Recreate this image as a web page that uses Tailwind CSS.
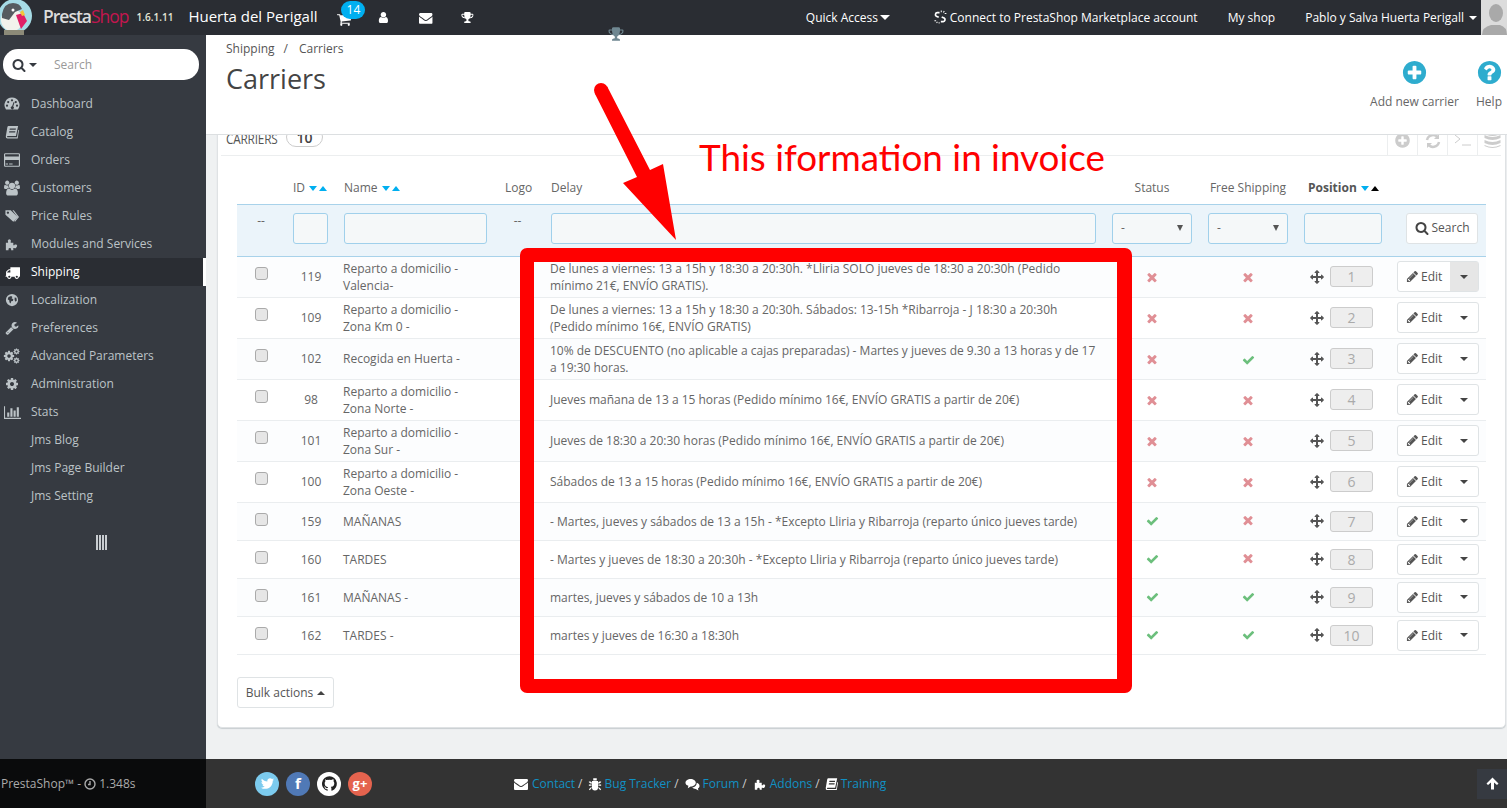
<!DOCTYPE html>
<html lang="en">
<head>
<meta charset="utf-8">
<title>Carriers</title>
<script src="https://cdn.jsdelivr.net/npm/@tailwindcss/browser@4"></script>
</head>
<body class="relative w-[1507px] h-[808px] overflow-hidden flex flex-col font-['Open_Sans',sans-serif] text-[12px] text-[#666] bg-[#eff1f2]">
<svg class="hidden" xmlns="http://www.w3.org/2000/svg">
<symbol id="check" viewBox="0 0 1792 1792"><path d="M1671 566q0 40-28 68l-724 724-136 136q-28 28-68 28t-68-28l-136-136-362-362q-28-28-28-68t28-68l136-136q28-28 68-28t68 28l294 295 656-657q28-28 68-28t68 28l136 136q28 28 28 68z"/></symbol>
<symbol id="times" viewBox="0 0 1408 1792"><path d="M1298 1214q0 40-28 68l-136 136q-28 28-68 28t-68-28l-294-294-294 294q-28 28-68 28t-68-28l-136-136q-28-28-28-68t28-68l294-294-294-294q-28-28-28-68t28-68l136-136q28-28 68-28t68 28l294 294 294-294q28-28 68-28t68 28l136 136q28 28 28 68t-28 68l-294 294 294 294q28 28 28 68z"/></symbol>
<symbol id="search" viewBox="0 0 1792 1792"><path d="M1216 832q0-185-131.500-316.500t-316.500-131.500-316.500 131.500-131.500 316.500 131.500 316.500 316.500 131.500 316.500-131.500 131.500-316.500zm512 832q0 52-38 90t-90 38q-54 0-90-38l-343-342q-179 124-399 124-143 0-273.500-55.500t-225-150-150-225-55.500-273.500 55.500-273.500 150-225 225-150 273.500-55.500 273.500 55.500 225 150 150 225 55.500 273.500q0 220-124 399l343 343q37 37 37 90z"/></symbol>
<symbol id="pencil" viewBox="0 0 1792 1792"><path d="M491 1536l91-91-235-235-91 91v107h128v128h107zm523-928q0-22-22-22-10 0-17 7l-542 542q-7 7-7 17 0 22 22 22 10 0 17-7l542-542q7-7 7-17zm-54-192l416 416-832 832h-416v-416zm683 96q0 53-37 90l-166 166-416-416 166-165q36-38 90-38 53 0 91 38l235 234q37 39 37 91z"/></symbol>
<symbol id="move" viewBox="0 0 1792 1792"><path d="M1792 896q0 26-19 45l-256 256q-19 19-45 19t-45-19-19-45v-128h-384v384h128q26 0 45 19t19 45-19 45l-256 256q-19 19-45 19t-45-19l-256-256q-19-19-19-45t19-45 45-19h128v-384h-384v128q0 26-19 45t-45 19-45-19l-256-256q-19-19-19-45t19-45l256-256q19-19 45-19t45 19 19 45v128h384v-384h-128q-26 0-45-19t-19-45 19-45l256-256q19-19 45-19t45 19l256 256q19 19 19 45t-19 45-45 19h-128v384h384v-128q0-26 19-45t45-19 45 19l256 256q19 19 19 45z"/></symbol>
<symbol id="envelope" viewBox="0 0 1792 1792"><path d="M1792 710v794q0 66-47 113t-113 47h-1472q-66 0-113-47t-47-113v-794q44 49 101 87 362 246 497 345 57 42 92.500 65.500t94.500 48 110 24.500h2q51 0 110-24.500t94.500-48 92.500-65.500q170-123 498-345 57-39 100-87zm0-294q0 79-49 151t-122 123q-376 261-468 325-10 7-42.500 30.500t-54 38-52 32.500-57.500 27-50 9h-2q-23 0-50-9t-57.500-27-52-32.500-54-38-42.500-30.500q-91-64-262-182.500t-205-142.500q-62-42-117-115.500t-55-136.500q0-78 41.500-130t118.500-52h1472q65 0 112.500 47t47.500 113z"/></symbol>
<symbol id="user" viewBox="0 0 1792 1792"><path d="M1536 1399q0 109-62.500 187t-150.500 78h-854q-88 0-150.500-78t-62.500-187q0-85 8.500-160.500t31.500-152 58.500-131 94-89 134.500-34.500q131 128 313 128t313-128q76 0 134.500 34.500t94 89 58.500 131 31.500 152 8.500 160.500zm-256-887q0 159-112.500 271.500t-271.500 112.500-271.500-112.500-112.500-271.500 112.500-271.500 271.500-112.500 271.500 112.500 112.500 271.500z"/></symbol>
<symbol id="cart" viewBox="0 0 1792 1792"><path d="M640 1536q0 52-38 90t-90 38-90-38-38-90 38-90 90-38 90 38 38 90zm896 0q0 52-38 90t-90 38-90-38-38-90 38-90 90-38 90 38 38 90zm128-1088v512q0 24-16.500 42.500t-40.500 21.500l-1044 122q13 60 13 70 0 16-24 64h920q26 0 45 19t19 45-19 45-45 19h-1024q-26 0-45-19t-19-45q0-11 8-31.500t16-36 21.500-40 15.500-29.500l-177-823h-204q-26 0-45-19t-19-45 19-45 45-19h256q16 0 28.500 6.500t19.500 15.500 13 24.500 8 26 5.500 29.500 4.500 26h1201q26 0 45 19t19 45z"/></symbol>
<symbol id="trophy" viewBox="0 0 1792 1792"><path d="M522 883q-74-162-74-371h-256v96q0 78 94.500 162t235.500 113zm1078-275v-96h-256q0 209-74 371 141-29 235.500-113t94.500-162zm128-128v128q0 71-41.500 143t-112 130-173 97.500-215.500 44.500q-42 54-95 95-38 34-52.500 72.500t-14.500 89.500q0 54 30.500 91t97.500 37q75 0 133.500 45.500t58.500 114.500v64q0 14-9 23t-23 9h-832q-14 0-23-9t-9-23v-64q0-69 58.500-114.500t133.500-45.500q67 0 97.500-37t30.500-91q0-51-14.500-89.500t-52.500-72.500q-53-41-95-95-113-5-215.500-44.500t-173-97.500-112-130-41.500-143v-128q0-40 28-68t68-28h288v-96q0-66 47-113t113-47h576q66 0 113 47t47 113v96h288q40 0 68 28t28 68z"/></symbol>
<symbol id="plus" viewBox="0 0 1792 1792"><path d="M1344 960v-128q0-26-19-45t-45-19h-256v-256q0-26-19-45t-45-19h-128q-26 0-45 19t-19 45v256h-256q-26 0-45 19t-19 45v128q0 26 19 45t45 19h256v256q0 26 19 45t45 19h128q26 0 45-19t19-45v-256h256q26 0 45-19t19-45zm320-64q0 209-103 385.500t-279.500 279.500-385.500 103-385.500-103-279.500-279.500-103-385.500 103-385.500 279.500-279.500 385.500-103 385.500 103 279.500 279.500 103 385.500z"/></symbol>
<symbol id="help" viewBox="0 0 1792 1792"><path d="M1024 1376v-192q0-14-9-23t-23-9h-192q-14 0-23 9t-9 23v192q0 14 9 23t23 9h192q14 0 23-9t9-23zm256-672q0-88-55.500-163t-138.500-116-170-41q-243 0-371 213-15 24 8 42l132 100q7 6 19 6 16 0 25-12 53-68 86-92 34-24 86-24 48 0 85.500 26t37.500 59q0 38-20 61t-68 45q-63 28-115.500 86.500t-52.500 125.500v36q0 14 9 23t23 9h192q14 0 23-9t9-23q0-19 21.500-49.500t54.500-49.500q32-18 49-28.500t46-35 44.500-48 28-60.500 12.500-81zm384 192q0 209-103 385.500t-279.500 279.500-385.500 103-385.500-103-279.500-279.500-103-385.500 103-385.500 279.500-279.500 385.500-103 385.500 103 279.500 279.500 103 385.500z"/></symbol>
<symbol id="card" viewBox="0 0 1792 1792"><path d="M1632 128q66 0 113 47t47 113v1216q0 66-47 113t-113 47h-1472q-66 0-113-47t-47-113v-1216q0-66 47-113t113-47h1472zm-1472 128q-13 0-22.500 9.500t-9.500 22.500v224h1536v-224q0-13-9.500-22.500t-22.500-9.500h-1472zm1472 1280q13 0 22.500-9.500t9.500-22.500v-608h-1536v608q0 13 9.500 22.500t22.500 9.500h1472zm-1440-128v-128h256v128h-256zm384 0v-128h384v128h-384z"/></symbol>
<symbol id="chart" viewBox="0 0 2048 1792"><path d="M640 896v512h-256v-512h256zm384-512v1024h-256v-1024h256zm1024 1152v128h-2048v-1536h128v1408h1920zm-640-896v768h-256v-768h256zm384-384v1152h-256v-1152h256z"/></symbol>
<symbol id="cog" viewBox="0 0 1792 1792"><path d="M1152 896q0-106-75-181t-181-75-181 75-75 181 75 181 181 75 181-75 75-181zm512-109v222q0 12-8 23t-20 13l-185 28q-19 54-39 91 35 50 107 138 10 12 10 25t-9 23q-27 37-99 108t-94 71q-12 0-26-9l-138-108q-44 23-91 38-16 136-29 186-7 28-36 28h-222q-14 0-24.500-8.500t-11.500-21.500l-28-184q-49-16-90-37l-141 107q-10 9-25 9-14 0-25-11-126-114-165-168-7-10-7-23 0-12 8-23 15-21 51-66.500t54-70.500q-27-50-41-99l-183-27q-13-2-21-12.500t-8-23.500v-222q0-12 8-23t19-13l186-28q14-46 39-92-40-57-107-138-10-12-10-24 0-10 9-23 26-36 98.500-107.500t94.500-71.500q13 0 26 10l138 107q44-23 91-38 16-136 29-186 7-28 36-28h222q14 0 24.500 8.500t11.500 21.500l28 184q49 16 90 37l142-107q9-9 24-9 13 0 25 10 129 119 165 170 7 8 7 22 0 12-8 23-15 21-51 66.500t-54 70.500q26 50 41 98l183 28q13 2 21 12.500t8 23.500z"/></symbol>
<symbol id="wrench" viewBox="0 0 1792 1792"><path d="M448 1472q0-26-19-45t-45-19-45 19-19 45 19 45 45 19 45-19 19-45zm644-420l-682 682q-37 37-90 37-52 0-91-37l-106-108q-38-36-38-90 0-53 38-91l681-681q39 98 114.500 173.500t173.500 114.500zm634-435q0 39-23 106-47 134-164.500 217.500t-258.500 83.500q-185 0-316.500-131.500t-131.500-316.500 131.500-316.500 316.500-131.500q58 0 121.500 16.500t107.500 46.500q16 11 16 28t-16 28l-293 169v224l193 107q5-3 79-48.500t135.500-81 70.500-35.500q15 0 23.500 10t8.500 25z"/></symbol>
<symbol id="truck" viewBox="0 0 1792 1792"><path d="M640 1408q0-52-38-90t-90-38-90 38-38 90 38 90 90 38 90-38 38-90zm-384-512h384v-256h-158q-13 0-22 9l-195 195q-9 9-9 22v30zm1280 512q0-52-38-90t-90-38-90 38-38 90 38 90 90 38 90-38 38-90zm256-1088v1024q0 15-4 26.500t-13.500 18.500-16.500 11.500-23.500 6-22.500 2-25.500 0-22.500-.5q0 106-75 181t-181 75-181-75-75-181h-384q0 106-75 181t-181 75-181-75-75-181h-64q-3 0-22.500.5t-25.500 0-22.500-2-23.500-6-16.500-11.500-13.500-18.500-4-26.500q0-26 19-45t45-19v-320q0-8-.5-35t0-38 2.500-34.500 6.500-37 14-30.500 22.500-30l198-198q19-19 50.500-32t58.500-13h160v-192q0-26 19-45t45-19h1024q26 0 45 19t19 45z"/></symbol>
<symbol id="users" viewBox="0 0 1920 1792"><path d="M593 896q-162 5-265 128h-134q-82 0-138-40.500t-56-118.500q0-353 124-353 6 0 43.500 21t97.500 42.500 119 21.500q67 0 133-23-5 37-5 66 0 139 81 256zm1071 637q0 120-73 189.500t-194 69.500h-874q-121 0-194-69.500t-73-189.500q0-53 3.500-103.500t14-109 26.500-108.500 43-97.500 62-81 85.500-53.500 111.500-20q10 0 43 21.500t73 48 107 48 135 21.500 135-21.500 107-48 73-48 43-21.500q61 0 111.500 20t85.500 53.500 62 81 43 97.500 26.500 108.500 14 109 3.500 103.500zm-1024-1277q0 106-75 181t-181 75-181-75-75-181 75-181 181-75 181 75 75 181zm704 384q0 159-112.500 271.500t-271.500 112.500-271.500-112.500-112.500-271.500 112.500-271.500 271.500-112.500 271.500 112.500 112.500 271.500zm576 225q0 78-56 118.500t-138 40.500h-134q-103-123-265-128 81-117 81-256 0-29-5-66 66 23 133 23 59 0 119-21.500t97.500-42.500 43.500-21q124 0 124 353zm-128-609q0 106-75 181t-181 75-181-75-75-181 75-181 181-75 181 75 75 181z"/></symbol>
<symbol id="twitter" viewBox="0 0 1792 1792"><path d="M1684 408q-67 98-162 167 1 14 1 42 0 130-38 259.500t-115.500 248.500-184.500 210.500-258 146-323 54.500q-271 0-496-145 35 4 78 4 225 0 401-138-105-2-188-64.500t-114-159.500q33 5 61 5 43 0 85-11-112-23-185.500-111.500t-73.500-205.500v-4q68 38 146 41-66-44-105-115t-39-154q0-88 44-163 121 149 294.500 238.500t371.500 99.500q-8-38-8-74 0-134 94.500-228.500t228.500-94.500q140 0 236 102 109-21 205-78-37 115-142 178 92-10 184-50z"/></symbol>
<symbol id="puzzle" viewBox="0 0 16 16"><path d="M3.500 5.500a1.800 1.800 0 1 1 3 0v1H9.500V9.500h1a1.800 1.800 0 1 1 0 3h-1V15H7v-1a1.500 1.500 0 0 0-3 0v1H1V6.500h2.500z"/><path d="M11 8.500h1.300a1.500 1.500 0 1 1 0 3H11z"/></symbol>
<symbol id="book" viewBox="0 0 16 16"><path d="M4 1h11l-2.500 11.500H3.200q-1 0-.9.800t1 .7h10.400l1.500-8.500.8.600L14.500 15.500H2.800Q.6 15.500.9 12.800L2.700 2.500Q3 1 4 1zm1.500 3-.3 1.500h7l.3-1.500zm-.6 3-.3 1.500h7l.3-1.500z" fill-rule="evenodd"/></symbol>
<symbol id="tags" viewBox="0 0 16 16"><path d="M.5 1.500h6l8 7.500-5 5.500-9-8zm2.800 1.400a1.300 1.300 0 1 0 .01 0z" fill-rule="evenodd"/><path d="M8.500 1.500h1.500l6 7.500-4.500 5.500-1-.8 3.700-4.700z"/></symbol>
<symbol id="gauge" viewBox="0 0 16 16"><path fill-rule="evenodd" d="M8 1.500A7.500 7.500 0 0 0 2 13.500h12A7.500 7.500 0 0 0 8 1.500zM8 3.200a1.100 1.100 0 1 1 0 2.200 1.100 1.100 0 0 1 0-2.200zM4.200 5a1.100 1.100 0 1 1 0 2.200 1.100 1.100 0 0 1 0-2.200zM11.800 5a1.100 1.100 0 1 1 0 2.200 1.100 1.100 0 0 1 0-2.200zM3 8.600a1.100 1.100 0 1 1 0 2.200 1.100 1.100 0 0 1 0-2.200zM13 8.600a1.100 1.100 0 1 1 0 2.200 1.100 1.100 0 0 1 0-2.200zM9.600 6l.9.400-1.300 4.100a1.500 1.500 0 1 1-1.100-.3z"/></symbol>
<symbol id="globe" viewBox="0 0 16 16"><path fill-rule="evenodd" d="M8 1a7 7 0 1 0 0 14A7 7 0 0 0 8 1zM4 4.500l3-1 1.500 1-1 1.500 2 1-.5 2-2 .5-.5 2.500-1.500-1.500V8.500L3 7zM11 5l2 .5.500 3-1.500 1.500-1-2z"/></symbol>
<symbol id="bug" viewBox="0 0 16 16"><path d="M6 1.500h4V4H6zM4.500 4.500h7V12a3.500 3.500 0 0 1-7 0zM1 5h2l1.500 1.500v1H3L1 6zM15 5h-2l-1.500 1.500v1H13l2-1.500zM1 8.500h3v1.500H1zM12 8.500h3v1.500h-3zM1 14l3-3v1.800L2 15zM15 14l-3-3v1.800L14 15z"/></symbol>
<symbol id="comments" viewBox="0 0 16 16"><path d="M6 2c3 0 5.500 1.800 5.500 4S9 10 6 10l-3 2 .6-2.600C1.800 8.700.5 7.500.5 6 .5 3.800 3 2 6 2zM12.500 6.200c1.800.6 3 1.800 3 3.300 0 1.100-.7 2-1.700 2.700l.5 2.300-2.800-1.800c-1.600 0-3-.5-3.800-1.400 3-.2 4.800-2.400 4.800-5.100z"/></symbol>
</svg>

<!-- top bar -->
<header class="h-[35px] shrink-0 bg-[#2a2d33] flex items-center text-white">
  <div class="w-[32px] h-[35px] relative overflow-hidden shrink-0">
    <svg width="32" height="35" viewBox="0 0 32 35"><circle cx="15" cy="16" r="17" fill="#a6dbe6"/><ellipse cx="12" cy="20" rx="11" ry="11" fill="#f2f2ec"/><path d="M2 14q2-11 11-11 7 0 9 6l-7 3-6 8-7-2z" fill="#565b60"/><path d="M16 15l7-2 4 8-6 8z" fill="#df1f66"/><path d="M20 12l3-2 2 5-3 1z" fill="#f2c53c"/><circle cx="13" cy="10" r="1.500" fill="#fff"/><rect x="4" y="30" width="20" height="5" fill="#8c8a78"/></svg>
  </div>
  <div class="ml-[11px] text-[17.5px] leading-none font-semibold tracking-[-1px] text-[#dcdcdc] -mt-[1px] whitespace-nowrap">Presta<span class="text-[#c3164f] font-normal">Shop</span></div>
  <div class="ml-[8px] text-[10px] font-semibold text-[#e4e6d8] whitespace-nowrap">1.6.1.11</div>
  <div class="ml-[15px] text-[15px] -mt-[2px] whitespace-nowrap">Huerta del Perigall</div>
  <div class="relative ml-[20px] w-[14px] h-[14px]">
    <svg class="w-[15px] h-[15px] fill-white mt-[1px]"><use href="#cart"/></svg>
    <span class="absolute left-[4px] -top-[10px] w-[24px] h-[18px] rounded-[10px] bg-[#00aff0] text-center text-[12px] leading-[18px]">14</span>
  </div>
  <svg class="ml-[26px] w-[15px] h-[15px] fill-white"><use href="#user"/></svg>
  <svg class="ml-[29px] w-[16px] h-[16px] fill-white"><use href="#envelope"/></svg>
  <svg class="ml-[28px] w-[15px] h-[15px] fill-white"><use href="#trophy"/></svg>
  <div class="ml-[332px] flex items-center whitespace-nowrap">Quick Access<span class="ml-[2px] w-0 h-0 border-x-[5px] border-x-transparent border-t-[5px] border-t-white"></span></div>
  <svg class="ml-[44px] -mt-[2px]" width="15" height="16" viewBox="0 0 15 16" fill="none" stroke="white" stroke-width="2"><path d="M6.500 3H3.800a2.200 2.200 0 0 0-1 4.100L5.500 8.200M9 8l2.800 1.200a2.200 2.200 0 0 1-1 4.100H8"/><path d="M8.500 .5v2M12 1l-1 1.700M14.500 4h-2M6 15.500V14M3 15l1-1.500M.5 12.500h2" stroke-width="1.200"/></svg>
  <div class="ml-[3px] whitespace-nowrap">Connect to PrestaShop Marketplace account</div>
  <div class="ml-[30px] whitespace-nowrap">My shop</div>
  <div class="ml-[30px] whitespace-nowrap">Pablo y Salva Huerta Perigall</div>
  <span class="ml-[5px] w-0 h-0 border-x-[4px] border-x-transparent border-t-[4px] border-t-white"></span>
  <div class="ml-[4px] w-[26px] h-[35px] bg-[#dcdcdc] overflow-hidden shrink-0">
    <svg width="26" height="35" viewBox="0 0 26 35"><ellipse cx="15" cy="13" rx="7" ry="9" fill="#a9a9a9"/><path d="M1 35q0-8 9-10h9q7 2 7 10z" fill="#a9a9a9"/></svg>
  </div>
</header>

<div class="flex-1 flex min-h-0">
  <!-- sidebar -->
  <aside class="w-[206px] shrink-0 bg-[#363a41] text-[#bcc3c7]">
    <div class="pl-[3px] pt-[14px] h-[55px]">
      <div class="w-[196px] h-[31px] bg-white rounded-[15px] flex items-center text-[#999]">
        <svg class="ml-[9px] w-[14px] h-[14px] fill-[#363a41]"><use href="#search"/></svg>
        <span class="ml-[3px] w-0 h-0 border-x-[4px] border-x-transparent border-t-[4px] border-t-[#363a41]"></span>
        <span class="ml-[17px]">Search</span>
      </div>
    </div>
    <nav>
      <div class="h-[28px] flex items-center"><span class="w-[31px] flex justify-center pr-[7px]"><svg class="w-[16px] h-[16px] fill-[#bcc3c7]"><use href="#gauge"/></svg></span>Dashboard</div>
      <div class="h-[28px] flex items-center"><span class="w-[31px] flex justify-center pr-[7px]"><svg class="w-[14px] h-[14px] fill-[#bcc3c7]"><use href="#book"/></svg></span>Catalog</div>
      <div class="h-[28px] flex items-center"><span class="w-[31px] flex justify-center pr-[7px]"><svg class="w-[16px] h-[16px] fill-[#bcc3c7]"><use href="#card"/></svg></span>Orders</div>
      <div class="h-[28px] flex items-center"><span class="w-[31px] flex justify-center pr-[7px]"><svg class="w-[16px] h-[16px] fill-[#bcc3c7]"><use href="#users"/></svg></span>Customers</div>
      <div class="h-[28px] flex items-center"><span class="w-[31px] flex justify-center pr-[7px]"><svg class="w-[16px] h-[14px] fill-[#bcc3c7]"><use href="#tags"/></svg></span>Price Rules</div>
      <div class="h-[28px] flex items-center"><span class="w-[31px] flex justify-center pr-[7px]"><svg class="w-[14px] h-[14px] fill-[#bcc3c7]"><use href="#puzzle"/></svg></span>Modules and Services</div>
      <div class="h-[28px] flex items-center bg-[#2a2d33] text-white border-r-[3px] border-r-white"><span class="w-[31px] flex justify-center pr-[7px]"><svg class="w-[15px] h-[15px] fill-white"><use href="#truck"/></svg></span>Shipping</div>
      <div class="h-[28px] flex items-center"><span class="w-[31px] flex justify-center pr-[7px]"><svg class="w-[14px] h-[14px] fill-[#bcc3c7]"><use href="#globe"/></svg></span>Localization</div>
      <div class="h-[28px] flex items-center"><span class="w-[31px] flex justify-center pr-[7px]"><svg class="w-[14px] h-[14px] fill-[#bcc3c7]"><use href="#wrench"/></svg></span>Preferences</div>
      <div class="h-[28px] flex items-center"><span class="w-[31px] relative block h-[16px]"><svg class="absolute left-[3px] top-[2px] w-[12px] h-[12px] fill-[#bcc3c7]"><use href="#cog"/></svg><svg class="absolute left-[13px] top-0 w-[7px] h-[7px] fill-[#bcc3c7]"><use href="#cog"/></svg><svg class="absolute left-[13px] top-[9px] w-[7px] h-[7px] fill-[#bcc3c7]"><use href="#cog"/></svg></span>Advanced Parameters</div>
      <div class="h-[28px] flex items-center"><span class="w-[31px] flex justify-center pr-[7px]"><svg class="w-[14px] h-[14px] fill-[#bcc3c7]"><use href="#cog"/></svg></span>Administration</div>
      <div class="h-[28px] flex items-center"><span class="w-[31px] flex justify-center pr-[7px]"><svg class="w-[17px] h-[15px] fill-[#bcc3c7]"><use href="#chart"/></svg></span>Stats</div>
      <div class="h-[28px] flex items-center pl-[31px]">Jms Blog</div>
      <div class="h-[28px] flex items-center pl-[31px]">Jms Page Builder</div>
      <div class="h-[28px] flex items-center pl-[31px]">Jms Setting</div>
      <div class="mt-[25px] ml-[96px] w-[11px] h-[15px] flex justify-between">
        <span class="w-[1.5px] bg-[#c8ccd0]"></span><span class="w-[1.5px] bg-[#c8ccd0]"></span><span class="w-[1.5px] bg-[#c8ccd0]"></span><span class="w-[1.5px] bg-[#c8ccd0]"></span>
      </div>
    </nav>
  </aside>

  <!-- main -->
  <main class="flex-1 min-w-0 flex flex-col">
    <div class="h-[100px] shrink-0 bg-white border-b border-[#dcdfe1] pl-[20px] flex justify-between relative z-10">
      <div>
        <div class="pt-[5px] leading-[17px] text-[#555]">Shipping<span class="ml-[9px] mr-[11px]">/</span>Carriers</div>
        <h1 class="text-[27px] leading-[36px] mt-[4px] text-[#444]">Carriers</h1>
      </div>
      <div class="flex pt-[24px] text-[#666]">
        <div class="w-[89px] flex flex-col items-center">
          <svg class="w-[27px] h-[27px] fill-[#2eacce]"><use href="#plus"/></svg>
          <span class="mt-[7px] leading-[17px] whitespace-nowrap">Add new carrier</span>
        </div>
        <div class="ml-[12px] w-[36px] flex flex-col items-center">
          <svg class="w-[27px] h-[27px] fill-[#2eacce]"><use href="#help"/></svg>
          <span class="mt-[7px] leading-[17px]">Help</span>
        </div>
      </div>
    </div>

    <div class="flex-1 min-h-0 overflow-hidden pl-[11px] pr-[1px]">
      <section class="-mt-[12px] h-[605px] bg-white rounded-[5px] border border-[#dfe2e4] shadow-[0_1px_1px_#c8ced1]">
        <div class="mx-[3px] mr-[4px] h-[32px] border-b border-[#eceeef] flex items-start pl-[5px] relative text-[#555]">
          <span class="text-[14px] leading-[20px] scale-x-[0.84] origin-left w-[60px] whitespace-nowrap mt-[5px] -tracking-[0.2px]">CARRIERS</span>
          <span class="w-[37px] h-[20px] mt-[3px] rounded-[10px] border border-[#ccc] text-center font-semibold leading-[20px] text-[14px] text-[#444]">10</span>
          <div class="ml-auto self-stretch flex mt-[9px]">
            <div class="w-[30px] border-l border-[#eceeef] flex justify-center"><svg class="w-[17px] h-[17px] fill-[#ccc] -mt-[1px]"><use href="#plus"/></svg></div>
            <div class="w-[30px] border-l border-[#eceeef] flex justify-center"><svg width="16" height="16" viewBox="0 0 16 16" fill="none" stroke="#ccc" stroke-width="2.500"><path d="M2 7a6 6 0 0 1 11-2M14 9a6 6 0 0 1-11 2"/><path d="M14 1v5H9M2 15v-5h5" fill="#ccc" stroke="none"/></svg></div>
            <div class="w-[30px] border-l border-[#eceeef] flex justify-center"><svg width="18" height="14" viewBox="0 0 18 14" fill="none" stroke="#ccc" stroke-width="1"><path d="M1 2l5 4-5 4M8 12h9"/></svg></div>
            <div class="w-[24px] border-l border-[#eceeef] flex justify-start pl-[6px]"><svg width="17" height="20" viewBox="0 0 17 20" fill="#ccc" class="-mt-[4px] shrink-0"><ellipse cx="8.500" cy="4" rx="8" ry="3"/><path d="M.5 6q8 4 16 0v3q-8 4-16 0zM.5 11q8 4 16 0v3q-8 4-16 0zM.5 16q8 4 16 0v1q-8 4-16 0z"/></svg></div>
          </div>
        </div>

        <div class="ml-[19px] w-[1249px] mt-[14px]">
          <table class="w-[1249px] table-fixed border-collapse text-[#666]">
            <colgroup><col class="w-[48px]"><col class="w-[51px]"><col class="w-[159px]"><col class="w-[48px]"><col class="w-[561px]"><col class="w-[96px]"><col class="w-[96px]"><col class="w-[94px]"><col class="w-[96px]"></colgroup>
            <thead>
              <tr class="h-[34px] [&>th]:pt-[3px]">
                <th class="font-normal"></th>
                <th class="font-normal text-left pl-[8px]"><span class="inline-flex items-center gap-[2px] whitespace-nowrap">ID <svg width="8" height="5" class="fill-[#00aff0] ml-[2px]"><polygon points="0,0 8,0 4,5"/></svg><svg width="8" height="5" class="fill-[#00aff0]"><polygon points="0,5 8,5 4,0"/></svg></span></th>
                <th class="font-normal text-left pl-[8px]"><span class="inline-flex items-center gap-[2px]">Name <svg width="8" height="5" class="fill-[#00aff0] ml-[2px]"><polygon points="0,0 8,0 4,5"/></svg><svg width="8" height="5" class="fill-[#00aff0]"><polygon points="0,5 8,5 4,0"/></svg></span></th>
                <th class="font-normal text-left pl-[10px]">Logo</th>
                <th class="font-normal text-left pl-[8px]">Delay</th>
                <th class="font-normal text-center">Status</th>
                <th class="font-normal text-center">Free Shipping</th>
                <th class="text-left pl-[12px] text-[#555] font-bold"><span class="inline-flex items-center gap-[2px] whitespace-nowrap">Position <svg width="8" height="5" class="fill-[#00aff0] ml-[2px]"><polygon points="0,0 8,0 4,5"/></svg><svg width="8" height="5" class="fill-black"><polygon points="0,5 8,5 4,0"/></svg></span></th>
                <th></th>
              </tr>
              <tr class="h-[52px] bg-[#ebf4fa] border-y border-[#a8d2ea]">
                <th class="font-normal text-center align-top pt-[7px]">--</th>
                <th class="px-[8px] align-top pt-[8px]"><div class="h-[31px] bg-[#f5f8f9] border border-[#a0d0eb] rounded-[3px]"></div></th>
                <th class="px-[8px] align-top pt-[8px]"><div class="h-[31px] bg-[#f5f8f9] border border-[#a0d0eb] rounded-[3px]"></div></th>
                <th class="font-normal text-center align-top pt-[7px] pr-[3px]">--</th>
                <th class="px-[8px] align-top pt-[8px]"><div class="h-[31px] bg-[#f5f8f9] border border-[#a0d0eb] rounded-[3px]"></div></th>
                <th class="px-[8px] align-top pt-[8px] font-normal"><div class="h-[31px] bg-[#f5f8f9] border border-[#a0d0eb] rounded-[3px] flex items-center justify-between px-[8px]"><span>-</span><span class="w-0 h-0 border-x-[3.500px] border-x-transparent border-t-[6px] border-t-[#555]"></span></div></th>
                <th class="px-[8px] align-top pt-[8px] font-normal"><div class="h-[31px] bg-[#f5f8f9] border border-[#a0d0eb] rounded-[3px] flex items-center justify-between px-[8px]"><span>-</span><span class="w-0 h-0 border-x-[3.500px] border-x-transparent border-t-[6px] border-t-[#555]"></span></div></th>
                <th class="px-[8px] align-top pt-[8px]"><div class="h-[31px] bg-[#f5f8f9] border border-[#a0d0eb] rounded-[3px]"></div></th>
                <th class="pl-[16px] pr-[8px] align-top pt-[8px] font-normal"><div class="h-[31px] bg-white border border-[#dfe3e5] rounded-[3px] flex items-center justify-center gap-[3px] text-[#555]"><svg class="w-[14px] h-[14px] fill-[#444]"><use href="#search"/></svg>Search</div></th>
              </tr>
            </thead>
            <tbody class="leading-[17px]">
              <tr class="h-[41px] bg-[#fcfdfe] border-b border-[#eaedef]">
                <td class="text-center"><input type="checkbox" class="w-[13px] h-[13px] appearance-none bg-[#e6e6e6] border border-[#aaa] rounded-[3px] -translate-y-[1px]"></td>
                <td class="text-center pl-[1px]">119</td>
                <td class="pl-[7px]">Reparto a domicilio -<br>Valencia-</td>
                <td></td>
                <td class="pl-[7px]">De lunes a viernes: 13 a 15h y 18:30 a 20:30h. *Lliria SOLO jueves de 18:30 a 20:30h (Pedido<br>mínimo 21€, ENVÍO GRATIS).</td>
                <td><svg class="mx-auto w-[12px] h-[14px] fill-[#e08f95] translate-y-[1px]"><use href="#times"/></svg></td>
                <td><svg class="mx-auto w-[12px] h-[14px] fill-[#e08f95] translate-y-[1px]"><use href="#times"/></svg></td>
                <td class="pl-[14px]"><div class="flex items-center gap-[6px]"><svg class="w-[14px] h-[14px] fill-[#555]"><use href="#move"/></svg><div class="w-[43px] h-[21px] bg-[#eee] border border-[#ccc] rounded-[3px] text-center leading-[19px] text-[14px] text-[#aaa]">1</div></div></td>
                <td class="pl-[7px]"><div class="w-[82px] h-[31px] bg-white border border-[#dfe3e5] rounded-[3px] flex items-center"><span class="flex-1 flex items-center gap-[2px] pl-[8px] text-[#555]"><svg class="w-[13px] h-[13px] fill-[#555]"><use href="#pencil"/></svg>Edit</span><span class="w-[28px] h-full bg-[#e6e6e6] flex items-center justify-center"><span class="w-0 h-0 border-x-[4px] border-x-transparent border-t-[4px] border-t-[#444]"></span></span></div></td>
              </tr>
              <tr class="h-[41px] border-b border-[#eaedef]">
                <td class="text-center"><input type="checkbox" class="w-[13px] h-[13px] appearance-none bg-[#e6e6e6] border border-[#aaa] rounded-[3px] -translate-y-[1px]"></td>
                <td class="text-center pl-[1px]">109</td>
                <td class="pl-[7px]">Reparto a domicilio -<br>Zona Km 0 -</td>
                <td></td>
                <td class="pl-[7px]">De lunes a viernes: 13 a 15h y 18:30 a 20:30h. Sábados: 13-15h *Ribarroja - J 18:30 a 20:30h<br>(Pedido mínimo 16€, ENVÍO GRATIS)</td>
                <td><svg class="mx-auto w-[12px] h-[14px] fill-[#e08f95] translate-y-[1px]"><use href="#times"/></svg></td>
                <td><svg class="mx-auto w-[12px] h-[14px] fill-[#e08f95] translate-y-[1px]"><use href="#times"/></svg></td>
                <td class="pl-[14px]"><div class="flex items-center gap-[6px]"><svg class="w-[14px] h-[14px] fill-[#555]"><use href="#move"/></svg><div class="w-[43px] h-[21px] bg-[#eee] border border-[#ccc] rounded-[3px] text-center leading-[19px] text-[14px] text-[#aaa]">2</div></div></td>
                <td class="pl-[7px]"><div class="w-[82px] h-[31px] bg-white border border-[#dfe3e5] rounded-[3px] flex items-center"><span class="flex-1 flex items-center gap-[2px] pl-[8px] text-[#555]"><svg class="w-[13px] h-[13px] fill-[#555]"><use href="#pencil"/></svg>Edit</span><span class="w-[28px] h-full flex items-center justify-center"><span class="w-0 h-0 border-x-[4px] border-x-transparent border-t-[4px] border-t-[#444]"></span></span></div></td>
              </tr>
              <tr class="h-[41px] bg-[#fcfdfe] border-b border-[#eaedef]">
                <td class="text-center"><input type="checkbox" class="w-[13px] h-[13px] appearance-none bg-[#e6e6e6] border border-[#aaa] rounded-[3px] -translate-y-[1px]"></td>
                <td class="text-center pl-[1px]">102</td>
                <td class="pl-[7px]">Recogida en Huerta -</td>
                <td></td>
                <td class="pl-[7px]">10% de DESCUENTO (no aplicable a cajas preparadas) - Martes y jueves de 9.30 a 13 horas y de 17<br>a 19:30 horas.</td>
                <td><svg class="mx-auto w-[12px] h-[14px] fill-[#e08f95] translate-y-[1px]"><use href="#times"/></svg></td>
                <td><svg class="mx-auto w-[13px] h-[14px] fill-[#6cbf7c] translate-y-[1px]"><use href="#check"/></svg></td>
                <td class="pl-[14px]"><div class="flex items-center gap-[6px]"><svg class="w-[14px] h-[14px] fill-[#555]"><use href="#move"/></svg><div class="w-[43px] h-[21px] bg-[#eee] border border-[#ccc] rounded-[3px] text-center leading-[19px] text-[14px] text-[#aaa]">3</div></div></td>
                <td class="pl-[7px]"><div class="w-[82px] h-[31px] bg-white border border-[#dfe3e5] rounded-[3px] flex items-center"><span class="flex-1 flex items-center gap-[2px] pl-[8px] text-[#555]"><svg class="w-[13px] h-[13px] fill-[#555]"><use href="#pencil"/></svg>Edit</span><span class="w-[28px] h-full flex items-center justify-center"><span class="w-0 h-0 border-x-[4px] border-x-transparent border-t-[4px] border-t-[#444]"></span></span></div></td>
              </tr>
              <tr class="h-[41px] border-b border-[#eaedef]">
                <td class="text-center"><input type="checkbox" class="w-[13px] h-[13px] appearance-none bg-[#e6e6e6] border border-[#aaa] rounded-[3px] -translate-y-[1px]"></td>
                <td class="text-center pl-[1px]">98</td>
                <td class="pl-[7px]">Reparto a domicilio -<br>Zona Norte -</td>
                <td></td>
                <td class="pl-[7px]">Jueves mañana de 13 a 15 horas (Pedido mínimo 16€, ENVÍO GRATIS a partir de 20€)</td>
                <td><svg class="mx-auto w-[12px] h-[14px] fill-[#e08f95] translate-y-[1px]"><use href="#times"/></svg></td>
                <td><svg class="mx-auto w-[12px] h-[14px] fill-[#e08f95] translate-y-[1px]"><use href="#times"/></svg></td>
                <td class="pl-[14px]"><div class="flex items-center gap-[6px]"><svg class="w-[14px] h-[14px] fill-[#555]"><use href="#move"/></svg><div class="w-[43px] h-[21px] bg-[#eee] border border-[#ccc] rounded-[3px] text-center leading-[19px] text-[14px] text-[#aaa]">4</div></div></td>
                <td class="pl-[7px]"><div class="w-[82px] h-[31px] bg-white border border-[#dfe3e5] rounded-[3px] flex items-center"><span class="flex-1 flex items-center gap-[2px] pl-[8px] text-[#555]"><svg class="w-[13px] h-[13px] fill-[#555]"><use href="#pencil"/></svg>Edit</span><span class="w-[28px] h-full flex items-center justify-center"><span class="w-0 h-0 border-x-[4px] border-x-transparent border-t-[4px] border-t-[#444]"></span></span></div></td>
              </tr>
              <tr class="h-[41px] bg-[#fcfdfe] border-b border-[#eaedef]">
                <td class="text-center"><input type="checkbox" class="w-[13px] h-[13px] appearance-none bg-[#e6e6e6] border border-[#aaa] rounded-[3px] -translate-y-[1px]"></td>
                <td class="text-center pl-[1px]">101</td>
                <td class="pl-[7px]">Reparto a domicilio -<br>Zona Sur -</td>
                <td></td>
                <td class="pl-[7px]">Jueves de 18:30 a 20:30 horas (Pedido mínimo 16€, ENVÍO GRATIS a partir de 20€)</td>
                <td><svg class="mx-auto w-[12px] h-[14px] fill-[#e08f95] translate-y-[1px]"><use href="#times"/></svg></td>
                <td><svg class="mx-auto w-[12px] h-[14px] fill-[#e08f95] translate-y-[1px]"><use href="#times"/></svg></td>
                <td class="pl-[14px]"><div class="flex items-center gap-[6px]"><svg class="w-[14px] h-[14px] fill-[#555]"><use href="#move"/></svg><div class="w-[43px] h-[21px] bg-[#eee] border border-[#ccc] rounded-[3px] text-center leading-[19px] text-[14px] text-[#aaa]">5</div></div></td>
                <td class="pl-[7px]"><div class="w-[82px] h-[31px] bg-white border border-[#dfe3e5] rounded-[3px] flex items-center"><span class="flex-1 flex items-center gap-[2px] pl-[8px] text-[#555]"><svg class="w-[13px] h-[13px] fill-[#555]"><use href="#pencil"/></svg>Edit</span><span class="w-[28px] h-full flex items-center justify-center"><span class="w-0 h-0 border-x-[4px] border-x-transparent border-t-[4px] border-t-[#444]"></span></span></div></td>
              </tr>
              <tr class="h-[41px] border-b border-[#eaedef]">
                <td class="text-center"><input type="checkbox" class="w-[13px] h-[13px] appearance-none bg-[#e6e6e6] border border-[#aaa] rounded-[3px] -translate-y-[1px]"></td>
                <td class="text-center pl-[1px]">100</td>
                <td class="pl-[7px]">Reparto a domicilio -<br>Zona Oeste -</td>
                <td></td>
                <td class="pl-[7px]">Sábados de 13 a 15 horas (Pedido mínimo 16€, ENVÍO GRATIS a partir de 20€)</td>
                <td><svg class="mx-auto w-[12px] h-[14px] fill-[#e08f95] translate-y-[1px]"><use href="#times"/></svg></td>
                <td><svg class="mx-auto w-[12px] h-[14px] fill-[#e08f95] translate-y-[1px]"><use href="#times"/></svg></td>
                <td class="pl-[14px]"><div class="flex items-center gap-[6px]"><svg class="w-[14px] h-[14px] fill-[#555]"><use href="#move"/></svg><div class="w-[43px] h-[21px] bg-[#eee] border border-[#ccc] rounded-[3px] text-center leading-[19px] text-[14px] text-[#aaa]">6</div></div></td>
                <td class="pl-[7px]"><div class="w-[82px] h-[31px] bg-white border border-[#dfe3e5] rounded-[3px] flex items-center"><span class="flex-1 flex items-center gap-[2px] pl-[8px] text-[#555]"><svg class="w-[13px] h-[13px] fill-[#555]"><use href="#pencil"/></svg>Edit</span><span class="w-[28px] h-full flex items-center justify-center"><span class="w-0 h-0 border-x-[4px] border-x-transparent border-t-[4px] border-t-[#444]"></span></span></div></td>
              </tr>
              <tr class="h-[38px] bg-[#fcfdfe] border-b border-[#eaedef]">
                <td class="text-center"><input type="checkbox" class="w-[13px] h-[13px] appearance-none bg-[#e6e6e6] border border-[#aaa] rounded-[3px]"></td>
                <td class="text-center pl-[1px]">159</td>
                <td class="pl-[7px]">MAÑANAS</td>
                <td></td>
                <td class="pl-[7px]">- Martes, jueves y sábados de 13 a 15h - *Excepto Lliria y Ribarroja (reparto único jueves tarde)</td>
                <td><svg class="mx-auto w-[13px] h-[14px] fill-[#6cbf7c]"><use href="#check"/></svg></td>
                <td><svg class="mx-auto w-[12px] h-[14px] fill-[#e08f95]"><use href="#times"/></svg></td>
                <td class="pl-[14px]"><div class="flex items-center gap-[6px]"><svg class="w-[14px] h-[14px] fill-[#555]"><use href="#move"/></svg><div class="w-[43px] h-[21px] bg-[#eee] border border-[#ccc] rounded-[3px] text-center leading-[19px] text-[14px] text-[#aaa]">7</div></div></td>
                <td class="pl-[7px]"><div class="w-[82px] h-[31px] bg-white border border-[#dfe3e5] rounded-[3px] flex items-center"><span class="flex-1 flex items-center gap-[2px] pl-[8px] text-[#555]"><svg class="w-[13px] h-[13px] fill-[#555]"><use href="#pencil"/></svg>Edit</span><span class="w-[28px] h-full flex items-center justify-center"><span class="w-0 h-0 border-x-[4px] border-x-transparent border-t-[4px] border-t-[#444]"></span></span></div></td>
              </tr>
              <tr class="h-[38px] border-b border-[#eaedef]">
                <td class="text-center"><input type="checkbox" class="w-[13px] h-[13px] appearance-none bg-[#e6e6e6] border border-[#aaa] rounded-[3px]"></td>
                <td class="text-center pl-[1px]">160</td>
                <td class="pl-[7px]">TARDES</td>
                <td></td>
                <td class="pl-[7px]">- Martes y jueves de 18:30 a 20:30h - *Excepto Lliria y Ribarroja (reparto único jueves tarde)</td>
                <td><svg class="mx-auto w-[13px] h-[14px] fill-[#6cbf7c]"><use href="#check"/></svg></td>
                <td><svg class="mx-auto w-[12px] h-[14px] fill-[#e08f95]"><use href="#times"/></svg></td>
                <td class="pl-[14px]"><div class="flex items-center gap-[6px]"><svg class="w-[14px] h-[14px] fill-[#555]"><use href="#move"/></svg><div class="w-[43px] h-[21px] bg-[#eee] border border-[#ccc] rounded-[3px] text-center leading-[19px] text-[14px] text-[#aaa]">8</div></div></td>
                <td class="pl-[7px]"><div class="w-[82px] h-[31px] bg-white border border-[#dfe3e5] rounded-[3px] flex items-center"><span class="flex-1 flex items-center gap-[2px] pl-[8px] text-[#555]"><svg class="w-[13px] h-[13px] fill-[#555]"><use href="#pencil"/></svg>Edit</span><span class="w-[28px] h-full flex items-center justify-center"><span class="w-0 h-0 border-x-[4px] border-x-transparent border-t-[4px] border-t-[#444]"></span></span></div></td>
              </tr>
              <tr class="h-[38px] bg-[#fcfdfe] border-b border-[#eaedef]">
                <td class="text-center"><input type="checkbox" class="w-[13px] h-[13px] appearance-none bg-[#e6e6e6] border border-[#aaa] rounded-[3px]"></td>
                <td class="text-center pl-[1px]">161</td>
                <td class="pl-[7px]">MAÑANAS -</td>
                <td></td>
                <td class="pl-[7px]">martes, jueves y sábados de 10 a 13h</td>
                <td><svg class="mx-auto w-[13px] h-[14px] fill-[#6cbf7c]"><use href="#check"/></svg></td>
                <td><svg class="mx-auto w-[13px] h-[14px] fill-[#6cbf7c]"><use href="#check"/></svg></td>
                <td class="pl-[14px]"><div class="flex items-center gap-[6px]"><svg class="w-[14px] h-[14px] fill-[#555]"><use href="#move"/></svg><div class="w-[43px] h-[21px] bg-[#eee] border border-[#ccc] rounded-[3px] text-center leading-[19px] text-[14px] text-[#aaa]">9</div></div></td>
                <td class="pl-[7px]"><div class="w-[82px] h-[31px] bg-white border border-[#dfe3e5] rounded-[3px] flex items-center"><span class="flex-1 flex items-center gap-[2px] pl-[8px] text-[#555]"><svg class="w-[13px] h-[13px] fill-[#555]"><use href="#pencil"/></svg>Edit</span><span class="w-[28px] h-full flex items-center justify-center"><span class="w-0 h-0 border-x-[4px] border-x-transparent border-t-[4px] border-t-[#444]"></span></span></div></td>
              </tr>
              <tr class="h-[38px] border-b border-[#eaedef]">
                <td class="text-center"><input type="checkbox" class="w-[13px] h-[13px] appearance-none bg-[#e6e6e6] border border-[#aaa] rounded-[3px]"></td>
                <td class="text-center pl-[1px]">162</td>
                <td class="pl-[7px]">TARDES -</td>
                <td></td>
                <td class="pl-[7px]">martes y jueves de 16:30 a 18:30h</td>
                <td><svg class="mx-auto w-[13px] h-[14px] fill-[#6cbf7c]"><use href="#check"/></svg></td>
                <td><svg class="mx-auto w-[13px] h-[14px] fill-[#6cbf7c]"><use href="#check"/></svg></td>
                <td class="pl-[14px]"><div class="flex items-center gap-[6px]"><svg class="w-[14px] h-[14px] fill-[#555]"><use href="#move"/></svg><div class="w-[43px] h-[21px] bg-[#eee] border border-[#ccc] rounded-[3px] text-center leading-[19px] text-[14px] text-[#aaa]">10</div></div></td>
                <td class="pl-[7px]"><div class="w-[82px] h-[31px] bg-white border border-[#dfe3e5] rounded-[3px] flex items-center"><span class="flex-1 flex items-center gap-[2px] pl-[8px] text-[#555]"><svg class="w-[13px] h-[13px] fill-[#555]"><use href="#pencil"/></svg>Edit</span><span class="w-[28px] h-full flex items-center justify-center"><span class="w-0 h-0 border-x-[4px] border-x-transparent border-t-[4px] border-t-[#444]"></span></span></div></td>
              </tr>
            </tbody>
          </table>
          <div class="mt-[22px] w-[97px] h-[31px] pt-[1px] bg-white border border-[#dfe3e5] rounded-[3px] flex items-center justify-center gap-[4px] text-[#555]">Bulk actions<span class="w-0 h-0 border-x-[4px] border-x-transparent border-b-[4px] border-b-[#444]"></span></div>
        </div>
      </section>
    </div>
  </main>
</div>

<!-- footer -->
<footer class="h-[49px] shrink-0 bg-[#333] flex items-center text-[#aaa] relative">
  <div class="w-[206px] h-full bg-[#0a0b0c] flex items-center pl-[1px] gap-[3px] whitespace-nowrap">PrestaShop™ - <svg width="12" height="12" viewBox="0 0 12 12" fill="none" stroke="#aaa" stroke-width="1.400"><circle cx="6" cy="6" r="5"/><path d="M6 3v3.500H4"/></svg> 1.348s</div>
  <div class="ml-[49px] flex gap-[7px]">
    <div class="w-[24px] h-[24px] rounded-full bg-[#7ccbee] flex items-center justify-center"><svg class="w-[15px] h-[15px] fill-white"><use href="#twitter"/></svg></div>
    <div class="w-[24px] h-[24px] rounded-full bg-[#5079b6] flex items-center justify-center text-white font-bold text-[15px] leading-none">f</div>
    <div class="w-[24px] h-[24px] rounded-full bg-white flex items-center justify-center"><svg width="15" height="15" viewBox="0 0 16 16" fill="#222"><path d="M8 .2a8 8 0 0 0-2.500 15.600c.4.100.5-.2.500-.4v-1.400c-2.200.5-2.700-1-2.700-1-.4-.9-.9-1.200-.9-1.200-.7-.5.100-.5.100-.5.800.100 1.200.8 1.200.8.700 1.200 1.900.9 2.300.7.100-.5.300-.9.500-1.100-1.800-.2-3.600-.9-3.600-4 0-.9.300-1.600.8-2.100-.1-.2-.4-1 .1-2.100 0 0 .7-.2 2.200.8a7.600 7.600 0 0 1 4 0c1.500-1 2.200-.8 2.200-.8.400 1.100.2 1.900.1 2.100.5.600.8 1.300.8 2.100 0 3.100-1.900 3.700-3.700 3.900.3.300.6.800.6 1.500v2.200c0 .2.100.5.600.4A8 8 0 0 0 8 .2z"/></svg></div>
    <div class="w-[24px] h-[24px] rounded-full bg-[#e4634e] flex items-center justify-center text-white font-bold text-[13px] leading-none">g+</div>
  </div>
  <div class="ml-[142px] flex items-center whitespace-nowrap text-[#ccc] mt-[1px]">
    <svg class="w-[14px] h-[14px] fill-white mr-[4px]"><use href="#envelope"/></svg><span class="text-[#1191c4]">Contact</span><span class="ml-[3px]">/</span>
    <svg class="w-[14px] h-[14px] fill-white ml-[5px] mr-[3px]"><use href="#bug"/></svg><span class="text-[#1191c4]">Bug Tracker</span><span class="ml-[3px]">/</span>
    <svg class="w-[15px] h-[15px] fill-white ml-[6px] mr-[3px]"><use href="#comments"/></svg><span class="text-[#1191c4]">Forum</span><span class="ml-[3px]">/</span>
    <svg class="w-[13px] h-[14px] fill-white ml-[7px] mr-[3px]"><use href="#puzzle"/></svg><span class="text-[#1191c4]">Addons</span><span class="ml-[3px]">/</span>
    <svg class="w-[13px] h-[14px] fill-white ml-[5px] mr-[3px]"><use href="#book"/></svg><span class="text-[#1191c4]">Training</span>
  </div>
  <div class="ml-auto w-[30px] h-[30px] bg-[#363a41] flex items-center justify-center"><svg width="13" height="13" viewBox="0 0 13 13" fill="white"><path d="M6.500 .5l6 6-1.500 1.500-3-2.500V12.500H5V5.500L2 8 .5 6.500z"/></svg></div>
</footer>

<!-- annotation drawn over the page -->
<svg class="absolute left-[608px] top-[26px] w-[16px] h-[16px] fill-[#6f8791] z-20"><use href="#trophy"/></svg>
<svg class="absolute left-0 top-0 z-20 pointer-events-none" width="1507" height="808" viewBox="0 0 1507 808">
  <circle cx="601" cy="90" r="7" fill="#f00"/>
  <polygon points="594.800,93.500 637,177 623,183 676,240 663,164 650,170 607.200,86.500" fill="#f00"/>
</svg>
<div class="absolute left-[520px] top-[248px] w-[612px] h-[445px] border-[14px] border-r-[15px] border-[#f00] rounded-[7px] z-20"></div>
<div class="absolute left-[699px] top-[133px] text-[36.8px] leading-[48px] text-[#f00] font-['Lato',sans-serif] whitespace-nowrap z-20">This iformation in invoice</div>
</body>
</html>
